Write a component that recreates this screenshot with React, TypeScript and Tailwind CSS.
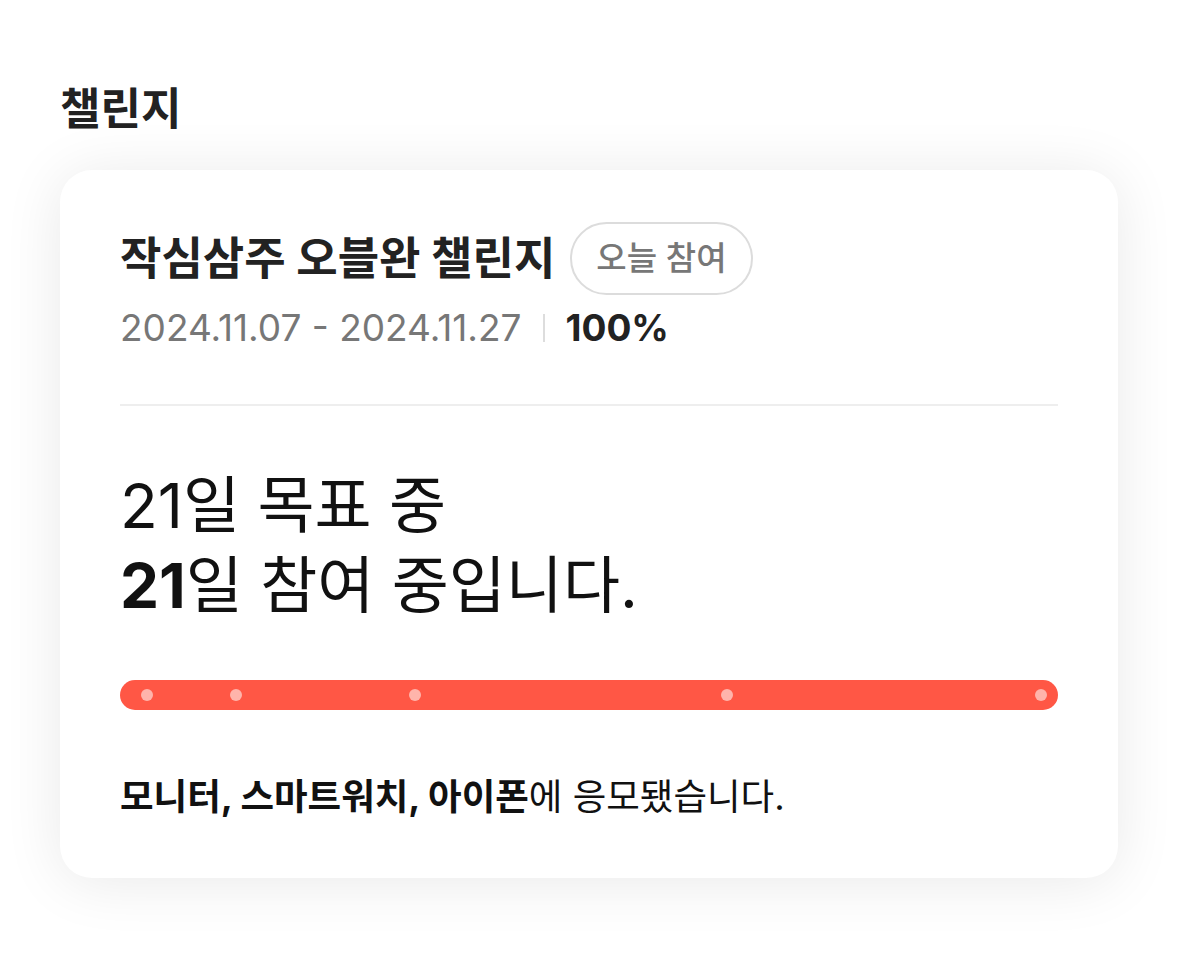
const dots = [27, 116, 295, 607, 921];

export default function App() {
  return (
    <div className="min-h-[956px] bg-white px-[60px] pt-[81px] font-['Inter','Noto_Sans_CJK_KR',sans-serif]">
      <h2 className="text-[44px] font-bold leading-[56px] text-[#222]">챌린지</h2>
      <div className="mt-[33px] w-[1058px] rounded-[32px] bg-white px-[60px] pt-[52px] pb-[58px] shadow-[0_4px_60px_rgba(0,0,0,0.09)]">
        <div className="flex items-center gap-[15px]">
          <h3 className="text-[45px] font-bold leading-[52px] text-[#222]">작심삼주 오블완 챌린지</h3>
          <span className="flex h-[73px] items-center rounded-full border-2 border-[#dcdcdc] px-[24px] text-[33px] font-medium text-[#777]">
            오늘 참여
          </span>
        </div>
        <div className="mt-[11px] flex items-center text-[37px] leading-[44px]">
          <span className="text-[#777]">2024.11.07 - 2024.11.27</span>
          <span className="mx-[21px] h-[28px] w-[2px] bg-[#ddd]" />
          <span className="font-bold text-[#222]">100%</span>
        </div>
        <div className="mt-[54px] h-[2px] bg-[#eee]" />
        <p className="mt-[60px] text-[62px] leading-[80px] text-[#111]">
          21일 목표 중
          <br />
          <b className="font-bold">21</b>일 참여 중입니다.
        </p>
        <div className="relative mt-[54px] h-[30px] rounded-full bg-[#ff5745]">
          {dots.map((x) => (
            <span
              key={x}
              className="absolute top-[9px] h-[12px] w-[12px] -translate-x-1/2 rounded-full bg-[#ffb4ab]"
              style={{ left: x }}
            />
          ))}
        </div>
        <p className="mt-[64px] text-[36.5px] leading-[46px] text-[#111]">
          <b className="font-bold">모니터, 스마트워치, 아이폰</b>에 응모됐습니다.
        </p>
      </div>
    </div>
  );
}
